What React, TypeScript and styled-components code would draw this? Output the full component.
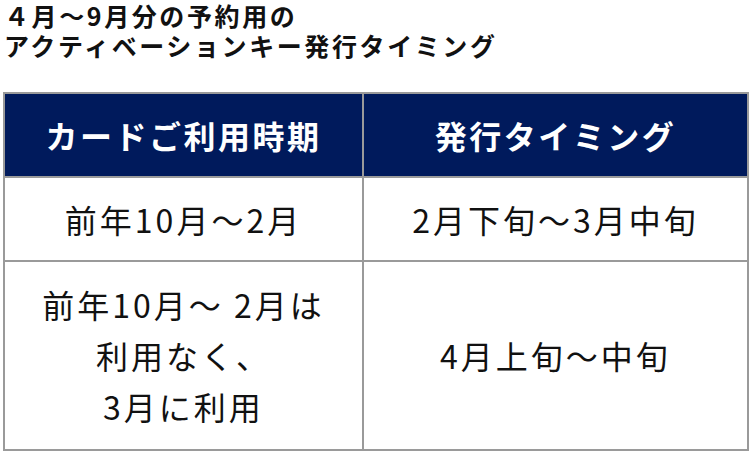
import React from "react";
import styled, { createGlobalStyle } from "styled-components";

const GlobalStyle = createGlobalStyle`
  html, body {
    margin: 0;
    padding: 0;
    background: #ffffff;
  }
  body {
    font-family: "Noto Sans CJK JP", "Noto Sans", sans-serif;
    color: #111111;
  }
`;

const Page = styled.div`
  width: 750px;
  height: 452px;
  overflow: hidden;
`;

const Title = styled.h2`
  margin: 0;
  padding: 0 0 0 4px;
  font-size: 25px;
  line-height: 30px;
  font-weight: 700;
  letter-spacing: 2.6px;
  color: #111111;
`;

const Table = styled.table`
  margin: 32px 0 0 3px;
  width: 746px;
  border-collapse: collapse;
  table-layout: fixed;
`;

const HeadCell = styled.th`
  height: 82px;
  padding: 0;
  background: #001a5c;
  color: #ffffff;
  font-size: 32px;
  font-weight: 700;
  letter-spacing: 2.5px;
  border: 2px solid #9a9a9a;
  text-align: center;
  vertical-align: middle;
`;

const Cell = styled.td<{ $tall?: boolean }>`
  height: ${(p) => (p.$tall ? "187px" : "82px")};
  padding: 0;
  font-size: 32px;
  font-weight: 400;
  letter-spacing: 3px;
  line-height: ${(p) => (p.$tall ? "51px" : "40px")};
  border: 2px solid #9a9a9a;
  text-align: center;
  vertical-align: middle;
  color: #111111;
`;

const rows = [
  { period: ["前年10月〜2月"], timing: "2月下旬〜3月中旬", tall: false },
  {
    period: ["前年10月〜 2月は", "利用なく、", "3月に利用"],
    timing: "4月上旬〜中旬",
    tall: true,
  },
];

export default function App() {
  return (
    <Page>
      <GlobalStyle />
      <Title>
        ４月〜9月分の予約用の
        <br />
        アクティベーションキー発行タイミング
      </Title>
      <Table>
        <colgroup>
          <col style={{ width: "359px" }} />
          <col />
        </colgroup>
        <thead>
          <tr>
            <HeadCell>カードご利用時期</HeadCell>
            <HeadCell>発行タイミング</HeadCell>
          </tr>
        </thead>
        <tbody>
          {rows.map((r) => (
            <tr key={r.timing}>
              <Cell $tall={r.tall}>
                {r.period.map((line, i) => (
                  <React.Fragment key={i}>
                    {i > 0 && <br />}
                    {line}
                  </React.Fragment>
                ))}
              </Cell>
              <Cell $tall={r.tall}>{r.timing}</Cell>
            </tr>
          ))}
        </tbody>
      </Table>
    </Page>
  );
}
